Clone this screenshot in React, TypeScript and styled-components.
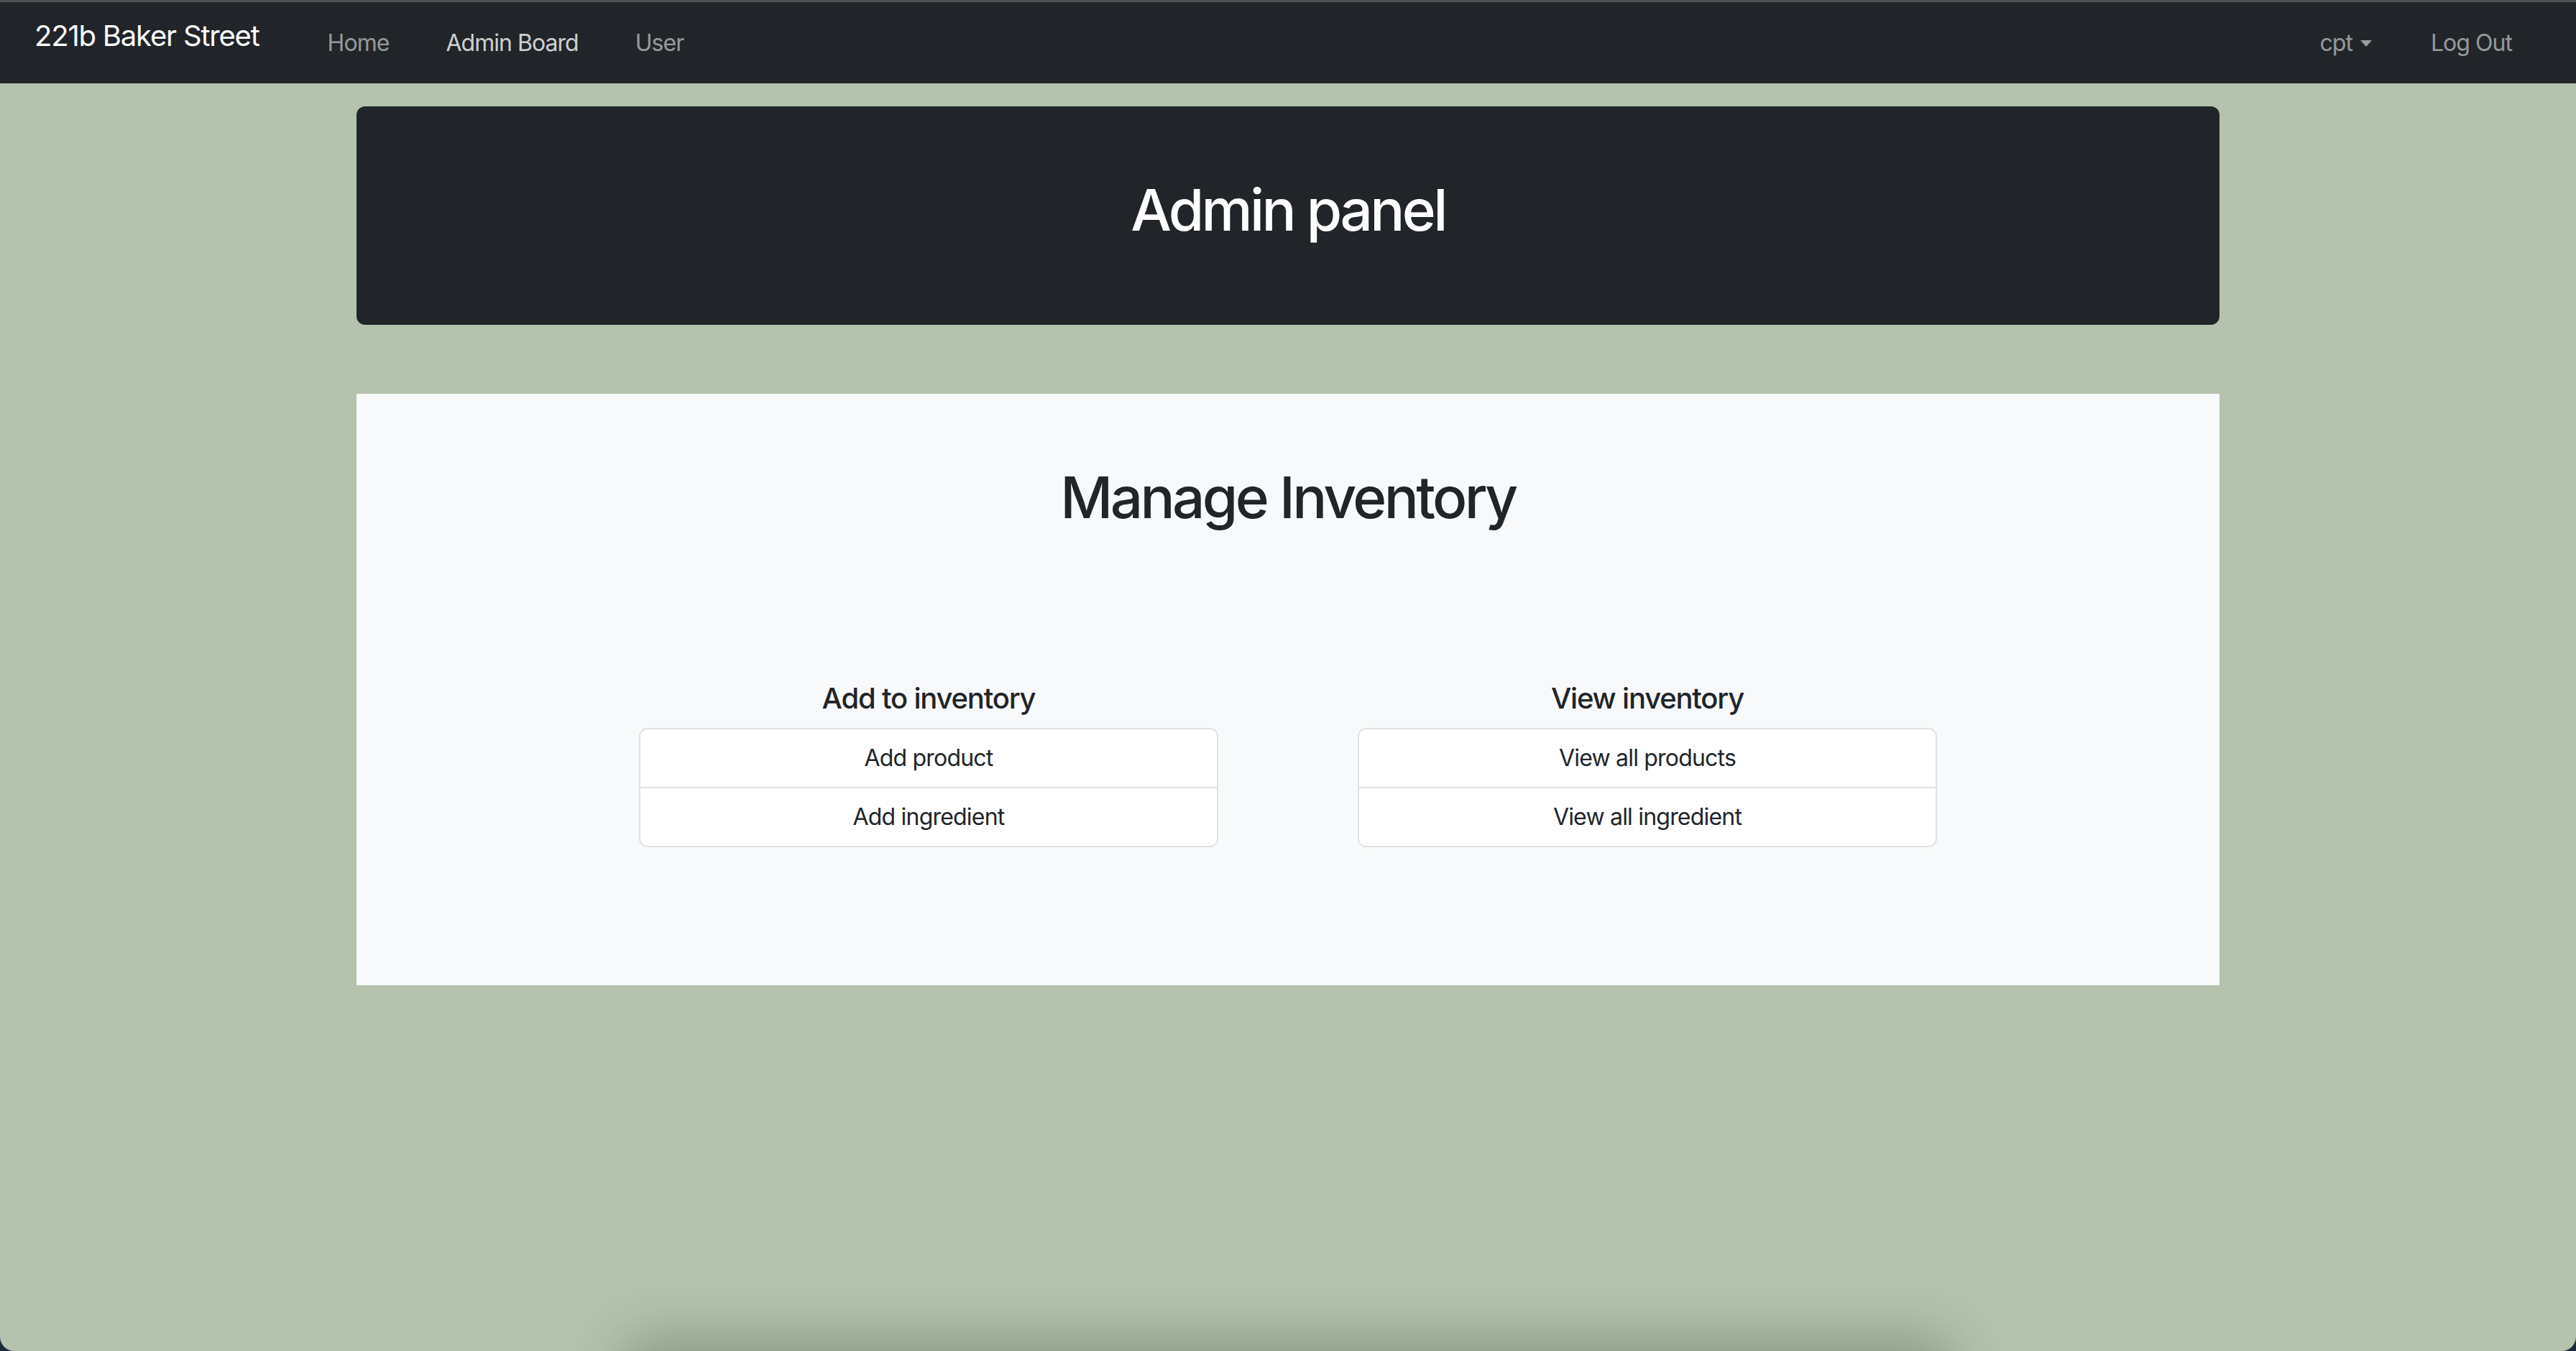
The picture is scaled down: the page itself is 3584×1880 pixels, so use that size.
import React from "react";
import styled, { createGlobalStyle } from "styled-components";

const GlobalStyle = createGlobalStyle`
  html, body {
    margin: 0;
    padding: 0;
    background: #1b2a38;
  }
  * { box-sizing: border-box; }
  body {
    font-family: Inter, "Noto Sans", "Liberation Sans", sans-serif;
    color: #212529;
    -webkit-font-smoothing: antialiased;
  }
`;

const Window = styled.div`
  position: relative;
  min-height: 100vh;
  background: #b5c3ae;
  border-top: 3px solid #505356;
  border-radius: 0 0 20px 20px;
  overflow: hidden;
`;

const NavBar = styled.nav`
  display: flex;
  align-items: center;
  height: 113px;
  padding: 0 89px 0 48px;
  background: #212529;
`;

const Brand = styled.a`
  font-size: 40px;
  line-height: 60px;
  letter-spacing: -0.03em;
  color: #fff;
  text-decoration: none;
  margin-bottom: 20px;
  margin-right: 95px;
`;

const NavGroup = styled.div<{ $right?: boolean }>`
  display: flex;
  align-items: center;
  gap: ${(p) => (p.$right ? "82px" : "79px")};
  margin-left: ${(p) => (p.$right ? "auto" : "0")};
`;

const NavLink = styled.a<{ $active?: boolean }>`
  display: flex;
  align-items: center;
  font-size: 32px;
  line-height: 48px;
  letter-spacing: -0.03em;
  color: ${(p) => (p.$active ? "rgba(255,255,255,0.8)" : "rgba(255,255,255,0.55)")};
  text-decoration: none;
  cursor: pointer;
`;

const Caret = styled.span`
  display: inline-block;
  margin-left: 11px;
  width: 0;
  height: 0;
  border-top: 9px solid currentColor;
  border-left: 8px solid transparent;
  border-right: 8px solid transparent;
  margin-top: 2px;
`;

const Container = styled.main`
  width: 2592px;
  margin: 32px auto 0;
`;

const Jumbotron = styled.section`
  padding: 96px;
  background: #212529;
  border-radius: 12px;
  color: #fff;
  text-align: center;
`;

const Title = styled.h1`
  margin: 0 0 16px;
  font-size: 80px;
  font-weight: 500;
  line-height: 1.2;
  letter-spacing: -0.045em;
`;

const Panel = styled.section`
  margin-top: 96px;
  padding: 96px;
  background: #f8f9fa;
  text-align: center;
`;

const Columns = styled.div`
  display: flex;
  justify-content: center;
  gap: 194px;
  padding: 192px 0 96px;
`;

const Column = styled.div`
  width: 806px;
  display: flex;
  flex-direction: column;
`;

const ColumnTitle = styled.h5`
  margin: 0 0 17px;
  font-size: 40px;
  font-weight: 500;
  line-height: 1.2;
  letter-spacing: -0.03em;
`;

const ListGroup = styled.div`
  display: flex;
  flex-direction: column;
  border: 2px solid #dee2e6;
  border-radius: 12px;
  background: #fff;
  overflow: hidden;
`;

const ListItem = styled.a`
  display: block;
  padding: 16px 32px;
  font-size: 32px;
  line-height: 48px;
  letter-spacing: -0.025em;
  color: #212529;
  text-decoration: none;
  background: #fff;
  & + & {
    border-top: 2px solid #dee2e6;
  }
`;

const DockShadow = styled.div`
  position: absolute;
  left: 880px;
  right: 880px;
  bottom: -80px;
  height: 80px;
  border-radius: 40px;
  box-shadow: 0 0 70px 24px rgba(40, 55, 40, 0.28);
  pointer-events: none;
`;

const sections = [
  { title: "Add to inventory", items: ["Add product", "Add ingredient"] },
  { title: "View inventory", items: ["View all products", "View all ingredient"] },
];

export default function App() {
  return (
    <>
      <GlobalStyle />
      <Window>
        <NavBar>
          <Brand href="#">221b Baker Street</Brand>
          <NavGroup>
            <NavLink>Home</NavLink>
            <NavLink $active>Admin Board</NavLink>
            <NavLink>User</NavLink>
          </NavGroup>
          <NavGroup $right>
            <NavLink>
              cpt
              <Caret />
            </NavLink>
            <NavLink>Log Out</NavLink>
          </NavGroup>
        </NavBar>
        <Container>
          <Jumbotron>
            <Title>Admin panel</Title>
          </Jumbotron>
          <Panel>
            <Title>Manage Inventory</Title>
            <Columns>
              {sections.map((s) => (
                <Column key={s.title}>
                  <ColumnTitle>{s.title}</ColumnTitle>
                  <ListGroup>
                    {s.items.map((it) => (
                      <ListItem key={it} href="#">
                        {it}
                      </ListItem>
                    ))}
                  </ListGroup>
                </Column>
              ))}
            </Columns>
          </Panel>
        </Container>
        <DockShadow />
      </Window>
    </>
  );
}
